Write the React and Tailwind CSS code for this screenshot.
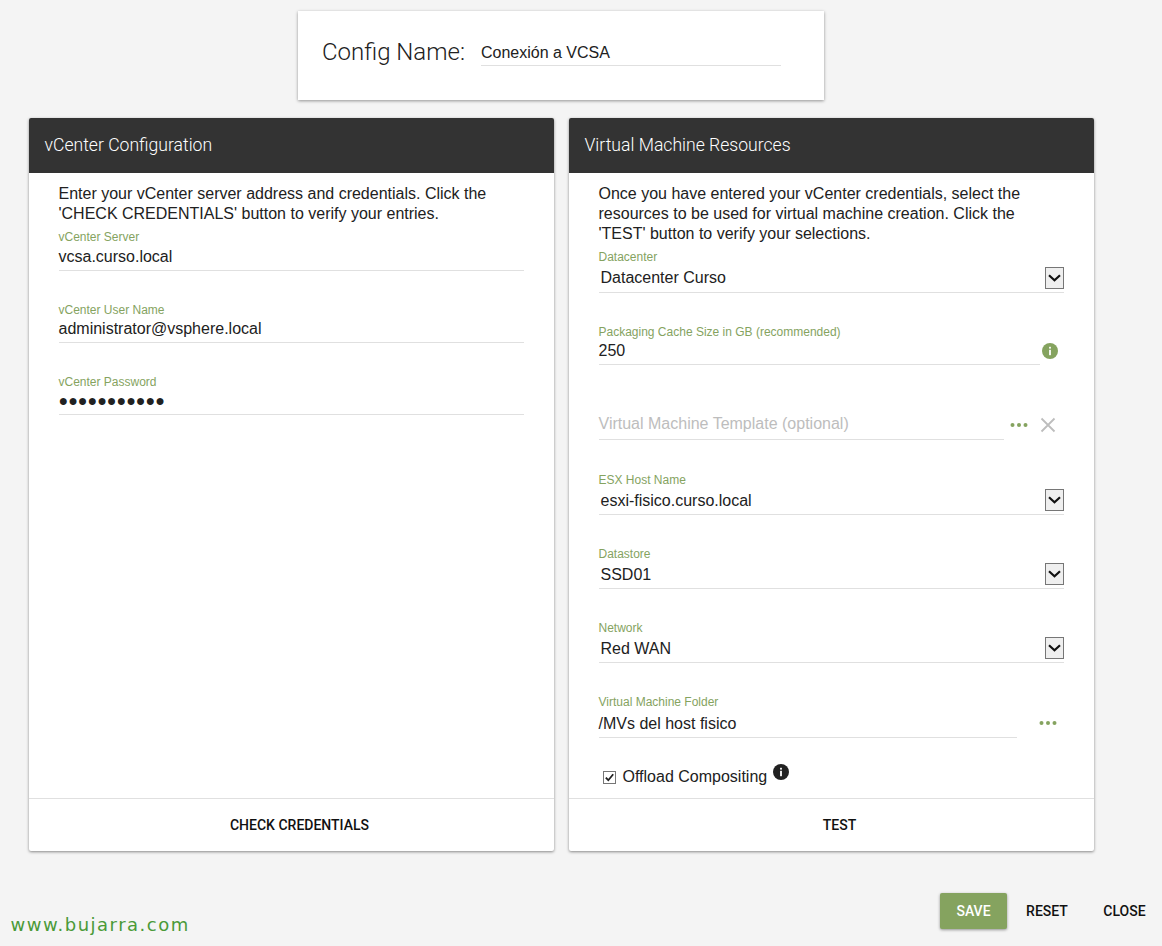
import React from 'react';

const sans = "font-['Liberation_Sans',Arial,sans-serif]";
const roboto = "font-['Roboto',sans-serif]";

const Dots = () => (
  <svg width="18" height="6" viewBox="0 0 18 6" className="block">
    <circle cx="2.5" cy="3" r="2" fill="#85a35f" />
    <circle cx="9" cy="3" r="2" fill="#85a35f" />
    <circle cx="15.5" cy="3" r="2" fill="#85a35f" />
  </svg>
);

const InfoIcon = ({ color }) => (
  <svg width="16" height="16" viewBox="0 0 16 16" className="block">
    <circle cx="8" cy="8" r="8" fill={color} />
    <rect x="7.1" y="6.8" width="1.8" height="5.4" fill="#fff" />
    <rect x="7.1" y="3.8" width="1.8" height="1.8" fill="#fff" />
  </svg>
);

const SelectArrow = () => (
  <div className="w-[19px] h-[22px] border border-[#767676] bg-[#efefef] flex items-center justify-center mb-[3px]">
    <svg width="13" height="8" viewBox="0 0 13 8">
      <path d="M1 1.2 L6.5 6.2 L12 1.2" fill="none" stroke="#111" strokeWidth="2.2" />
    </svg>
  </div>
);

const CheckBox = () => (
  <svg width="13" height="13" viewBox="0 0 13 13" className="block">
    <rect x="0.5" y="0.5" width="12" height="12" fill="#fff" stroke="#767676" />
    <path d="M2.8 6.6 L5.3 9.2 L10.2 3.2" fill="none" stroke="#212121" strokeWidth="1.8" />
  </svg>
);

const Label = ({ children }) => (
  <div className={`text-xs leading-[14px] text-[#85a35f] ${sans}`}>{children}</div>
);

const Field = ({ label, value, className = '', valueClass = 'h-[26px] leading-[24px]' }) => (
  <div className={className}>
    <Label>{label}</Label>
    <div className={`border-b border-[#e0e0e0] text-base text-[#212121] ${valueClass}`}>{value}</div>
  </div>
);

const SelectField = ({ label, value, className = '', boxClass = 'h-[28px]', textClass = 'leading-[27px]' }) => (
  <div className={className}>
    <Label>{label}</Label>
    <div className={`border-b border-[#e0e0e0] flex items-end justify-between ${boxClass}`}>
      <span className={`pl-[2px] text-base text-[#212121] ${textClass}`}>{value}</span>
      <SelectArrow />
    </div>
  </div>
);

const Card = ({ title, action, children }) => (
  <div className="w-[525px] h-[733px] bg-white rounded-[2px] shadow-[0_1px_3px_rgba(0,0,0,0.45)] flex flex-col">
    <div className={`h-[55px] bg-[#333333] rounded-t-[2px] pl-[15.5px] flex items-center text-white text-[17.6px] font-light ${roboto}`}>
      {title}
    </div>
    <div className="flex-1 pl-[29.5px] pr-[30px] pt-[11px]">{children}</div>
    <div className={`h-[53px] pl-[16px] border-t border-[#e0e0e0] flex items-center justify-center text-sm font-medium text-[#111] ${roboto}`}>
      {action}
    </div>
  </div>
);

const App = () => {
  return (
    <div className={`w-full h-[946px] overflow-hidden bg-[#f4f4f4] flex flex-col ${sans}`}>
      <div className="pt-[11px] pl-[298px]">
        <div className="w-[526px] h-[89px] bg-white shadow-[0_1px_3px_rgba(0,0,0,0.4)] flex items-start pl-[24px] pt-[25px]">
          <div className={`text-2xl leading-[32px] font-light text-[#212121] ${roboto}`}>Config Name:</div>
          <div className="ml-[16px] w-[300px] h-[30px] border-b border-[#e0e0e0] text-base leading-[34px] text-[#212121]">
            Conexión a VCSA
          </div>
        </div>
      </div>

      <div className="pt-[18px] pl-[29px] flex gap-[15px]">
        <Card title="vCenter Configuration" action="CHECK CREDENTIALS">
          <p className="text-base leading-[20px] text-[#212121]">
            Enter your vCenter server address and credentials. Click the
            <br />
            'CHECK CREDENTIALS' button to verify your entries.
          </p>
          <Field className="mt-[6px]" valueClass="h-[27px] leading-[26px]" label="vCenter Server" value="vcsa.curso.local" />
          <Field className="mt-[32px]" label="vCenter User Name" value="administrator@vsphere.local" />
          <Field className="mt-[32px]" label="vCenter Password" value="●●●●●●●●●●●" />
        </Card>

        <Card title="Virtual Machine Resources" action="TEST">
          <p className="text-base leading-[20px] text-[#212121]">
            Once you have entered your vCenter credentials, select the
            <br />
            resources to be used for virtual machine creation. Click the
            <br />
            'TEST' button to verify your selections.
          </p>
          <SelectField className="mt-[6px]" boxClass="h-[29px]" textClass="leading-[29px]" label="Datacenter" value="Datacenter Curso" />
          <div className="mt-[32px] flex items-end">
            <Field className="w-[441px]" label="Packaging Cache Size in GB (recommended)" value="250" />
            <div className="ml-[2px] w-[16px] mb-[6px]">
              <InfoIcon color="#85a35f" />
            </div>
          </div>
          <div className="mt-[45px] flex items-end">
            <div className="w-[405px] h-[30px] border-b border-[#e0e0e0] text-base leading-[28px] text-[#bdbdbd]">
              Virtual Machine Template (optional)
            </div>
            <div className="ml-[6px] mb-[12px]"><Dots /></div>
            <svg width="16" height="16" viewBox="0 0 16 16" className="ml-[12px] mb-[7px]">
              <path d="M1.5 1.5 L14.5 14.5 M14.5 1.5 L1.5 14.5" stroke="#bdbdbd" strokeWidth="1.8" />
            </svg>
          </div>
          <SelectField className="mt-[33px]" label="ESX Host Name" value="esxi-fisico.curso.local" />
          <SelectField className="mt-[32px]" label="Datastore" value="SSD01" />
          <SelectField className="mt-[32px]" label="Network" value="Red WAN" />
          <div className="mt-[32px] flex items-end">
            <Field className="w-[418px]" valueClass="h-[29px] leading-[30px]" label="Virtual Machine Folder" value="/MVs del host fisico" />
            <div className="ml-[22px] mb-[12px]"><Dots /></div>
          </div>
          <div className="mt-[27px] pl-[4px] flex items-center h-[24px]">
            <CheckBox />
            <span className="ml-[7px] text-base leading-[24px] text-[#212121]">Offload Compositing</span>
            <div className="ml-[6px] mb-[10px]"><InfoIcon color="#212121" /></div>
          </div>
        </Card>
      </div>

      <div className="flex-1 flex items-start justify-between">
        <div className="pl-[10.5px] pt-[62px] font-['DejaVu_Sans',sans-serif] text-lg leading-[24px] tracking-[1.5px] text-[#4a9a38]">
          www.bujarra.com
        </div>
        <div className={`pt-[42px] flex items-center text-sm font-medium ${roboto}`}>
          <button className="w-[67px] h-[36px] bg-[#85a35f] rounded-[2px] text-white shadow-[0_1px_3px_rgba(0,0,0,0.4)]">SAVE</button>
          <button className="w-[80px] h-[36px] text-[#111]">RESET</button>
          <button className="w-[75px] h-[36px] text-[#111]">CLOSE</button>
        </div>
      </div>
    </div>
  );
};

export default App;
